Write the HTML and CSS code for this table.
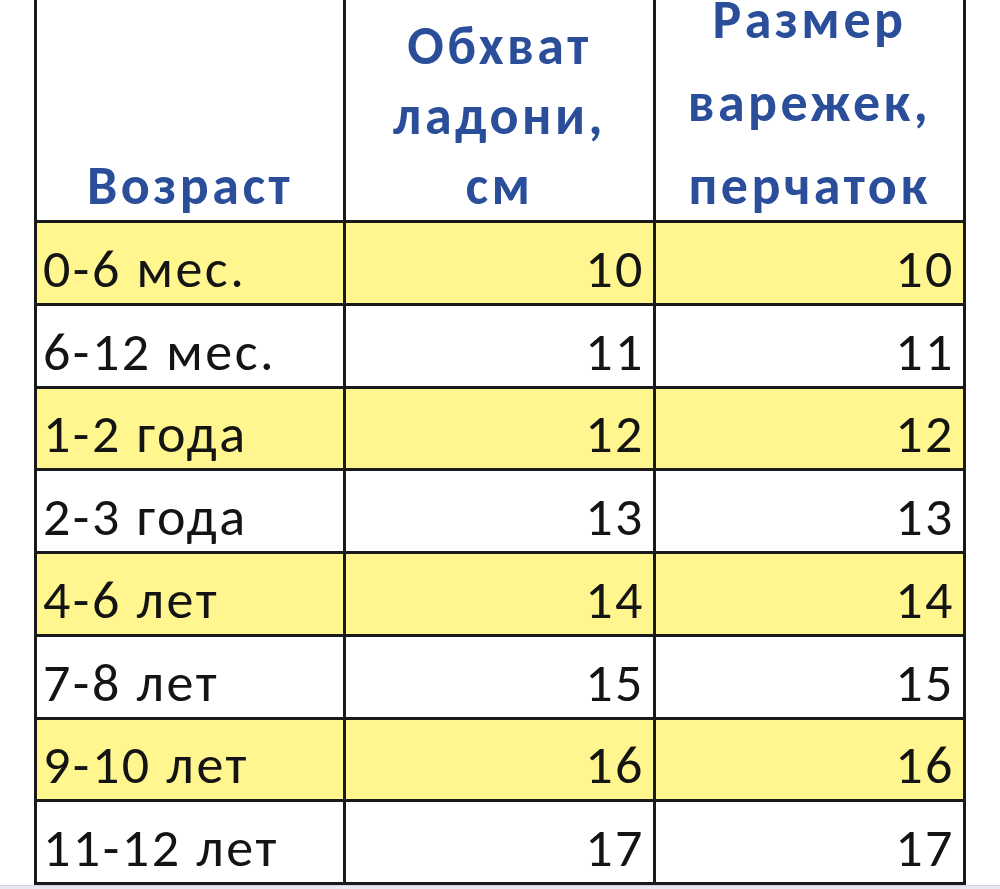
FILE: index.html
```html
<!DOCTYPE html>
<html lang="ru">
<head>
<meta charset="utf-8">
<title>Размеры варежек и перчаток</title>
<link rel="stylesheet" href="styles.css">
</head>
<body>
<div class="sheet">
  <div class="grid">
    <div class="cell head"><span class="h1">Возраст</span></div>
    <div class="cell head"><span class="h2">Обхват<br>ладони,<br>см</span></div>
    <div class="cell head"><span class="h3">Размер<br>варежек,<br>перчаток</span></div>

    <div class="cell age y">0-6 мес.</div><div class="cell num y">10</div><div class="cell num y">10</div>
    <div class="cell age">6-12 мес.</div><div class="cell num">11</div><div class="cell num">11</div>
    <div class="cell age y">1-2 года</div><div class="cell num y">12</div><div class="cell num y">12</div>
    <div class="cell age">2-3 года</div><div class="cell num">13</div><div class="cell num">13</div>
    <div class="cell age y">4-6 лет</div><div class="cell num y">14</div><div class="cell num y">14</div>
    <div class="cell age">7-8 лет</div><div class="cell num">15</div><div class="cell num">15</div>
    <div class="cell age y">9-10 лет</div><div class="cell num y">16</div><div class="cell num y">16</div>
    <div class="cell age">11-12 лет</div><div class="cell num">17</div><div class="cell num">17</div>
  </div>
  <div class="edge"></div>
</div>
</body>
</html>
```
FILE: styles.css
```css
html, body {
  margin: 0;
  padding: 0;
  background: #ffffff;
}
body {
  font-family: "Calibri", "Carlito", "Open Sans", "Noto Sans", sans-serif;
  color: #141414;
  overflow: hidden;
}
.sheet {
  width: 1000px;
  height: 889px;
  display: flex;
  flex-direction: column;
}
.grid {
  margin-left: 34px;
  width: 932px;
  box-sizing: border-box;
  border-left: 3px solid #1a1a1a;
  display: grid;
  grid-template-columns: 309px 310px 310px;
  grid-template-rows: 223px repeat(8, 82.75px);
}
.cell {
  box-sizing: border-box;
  border-right: 3px solid #1a1a1a;
  border-bottom: 3px solid #1a1a1a;
  display: flex;
  align-items: flex-end;
  font-size: 54px;
  line-height: 1;
  letter-spacing: 2.5px;
  padding-bottom: 7px;
}
.y {
  background: #fff68f;
}
.head {
  justify-content: center;
  text-align: center;
  font-weight: 700;
  color: #2a4e9a;
  letter-spacing: 3.5px;
  padding-bottom: 7px;
}
.h2 {
  line-height: 70px;
  margin-bottom: -8px;
}
.h3 {
  line-height: 83px;
  margin-bottom: -14.5px;
}
.age {
  padding-left: 6px;
}
.num {
  justify-content: flex-end;
  padding-right: 8px;
}
.edge {
  flex: 1;
  border-top: 1px solid #cfd5de;
  background: #e6e9ef;
}
```
